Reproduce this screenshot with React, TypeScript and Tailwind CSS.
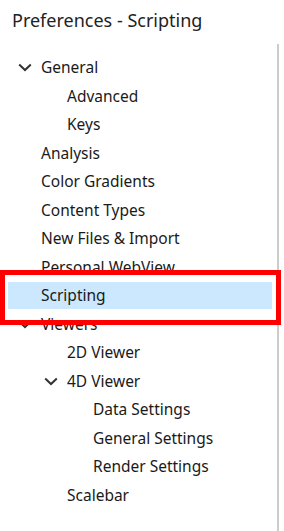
import React from "react";

type Item = { label: string; level: number; expanded?: boolean; selected?: boolean };

const items: Item[] = [
  { label: "General", level: 0, expanded: true },
  { label: "Advanced", level: 1 },
  { label: "Keys", level: 1 },
  { label: "Analysis", level: 0 },
  { label: "Color Gradients", level: 0 },
  { label: "Content Types", level: 0 },
  { label: "New Files & Import", level: 0 },
  { label: "Personal WebView", level: 0 },
  { label: "Scripting", level: 0, selected: true },
  { label: "Viewers", level: 0, expanded: true },
  { label: "2D Viewer", level: 1 },
  { label: "4D Viewer", level: 1, expanded: true },
  { label: "Data Settings", level: 2 },
  { label: "General Settings", level: 2 },
  { label: "Render Settings", level: 2 },
  { label: "Scalebar", level: 1 },
];

const padClass = ["pl-[41px]", "pl-[67px]", "pl-[93px]"];
const chevClass = ["left-[18px]", "left-[44px]", "left-[70px]"];

function Chevron() {
  return (
    <svg width="14" height="9" viewBox="0 0 14 9" fill="none">
      <path d="M1.2 1.5 L7 7 L12.8 1.5" stroke="#333333" strokeWidth="2" />
    </svg>
  );
}

export default function App() {
  return (
    <div
      className="relative w-[284px] h-[531px] bg-white overflow-hidden text-[#1a1a1a]"
      style={{ fontFamily: '"Noto Sans", "Open Sans", sans-serif' }}
    >
      <div className="h-[44px] pl-[12px] pt-[8px] text-[18px] leading-[25px] text-[#222222]">
        Preferences - Scripting
      </div>
      <div className="w-[279px] h-[487px] border-r-2 border-[#cccccc] pt-[9px]">
        {items.map((it) => (
          <div key={it.label} className="relative h-[28.5px] flex items-center">
            {it.selected && (
              <div className="absolute left-[8px] right-[5px] top-[0.5px] bottom-[0.5px] bg-[#cce8ff]" />
            )}
            {it.expanded && (
              <div className={`absolute top-[10px] ${chevClass[it.level]} flex`}>
                <Chevron />
              </div>
            )}
            <span className={`relative ${padClass[it.level]} text-[15.5px] leading-[20px]`}>
              {it.label}
            </span>
          </div>
        ))}
      </div>
      <div className="absolute left-0 top-[270px] w-[281px] h-[55px] border-[5px] border-[#ff0000]" />
    </div>
  );
}
